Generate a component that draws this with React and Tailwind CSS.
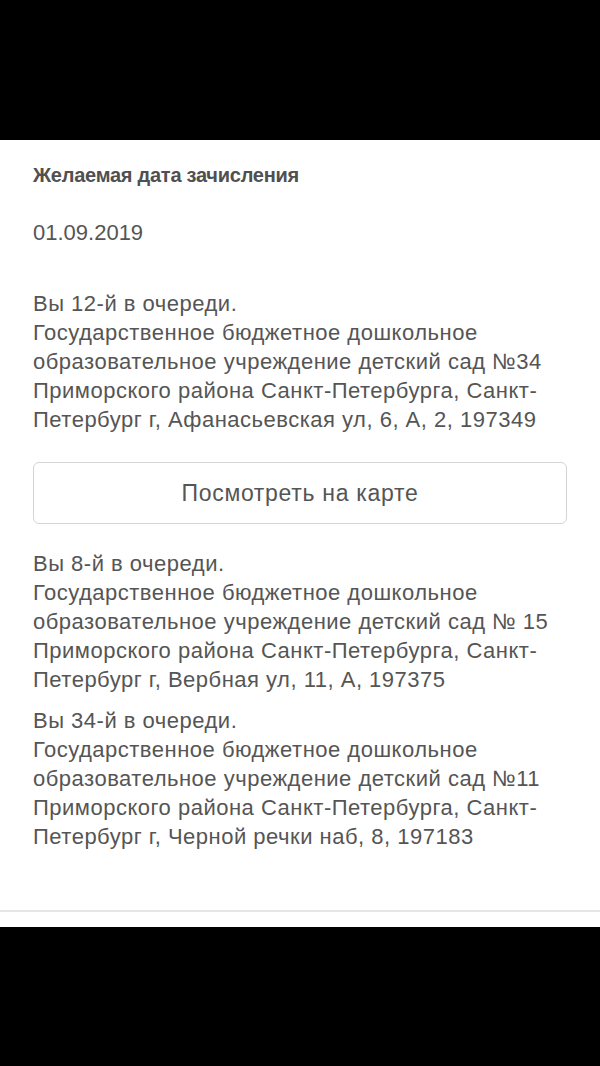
import React from "react";

const queues = [
  {
    place: "Вы 12-й в очереди.",
    lines: [
      "Государственное бюджетное дошкольное",
      "образовательное учреждение детский сад №34",
      "Приморского района Санкт-Петербурга, Санкт-",
      "Петербург г, Афанасьевская ул, 6, А, 2, 197349",
    ],
  },
  {
    place: "Вы 8-й в очереди.",
    lines: [
      "Государственное бюджетное дошкольное",
      "образовательное учреждение детский сад № 15",
      "Приморского района Санкт-Петербурга, Санкт-",
      "Петербург г, Вербная ул, 11, А, 197375",
    ],
  },
  {
    place: "Вы 34-й в очереди.",
    lines: [
      "Государственное бюджетное дошкольное",
      "образовательное учреждение детский сад №11",
      "Приморского района Санкт-Петербурга, Санкт-",
      "Петербург г, Черной речки наб, 8, 197183",
    ],
  },
];

function QueueItem({ item }) {
  return (
    <div className="text-[22px] leading-[29px] tracking-[0.5px] text-[#555555]">
      <div>{item.place}</div>
      {item.lines.map((line) => (
        <div key={line} className="whitespace-nowrap">{line}</div>
      ))}
    </div>
  );
}

export default function App() {
  return (
    <div className="w-[600px] min-h-[1066px] bg-black" style={{ fontFamily: "'Liberation Sans', Arial, sans-serif" }}>
      <div className="h-[140px]" />
      <div className="bg-white">
        <div className="px-[33px] pt-[21px]">
          <h2 className="text-[20px] leading-[29px] font-bold tracking-[-0.25px] text-[#505050]">Желаемая дата зачисления</h2>
          <div className="mt-[28px] text-[22px] leading-[29px] text-[#555555]">01.09.2019</div>

          <div className="mt-[42px]">
            <QueueItem item={queues[0]} />
          </div>

          <button className="mt-[28px] w-full h-[62px] rounded-[6px] border border-[#d4d4d4] bg-white text-[23px] tracking-[0.7px] text-[#555555]">
            Посмотреть на карте
          </button>

          <div className="mt-[25px]">
            <QueueItem item={queues[1]} />
          </div>
          <div className="mt-[12px]">
            <QueueItem item={queues[2]} />
          </div>
        </div>
        <div className="h-[59px]" />
        <div className="h-[2px] bg-[#e6e6e6]" />
        <div className="h-[15px]" />
      </div>
    </div>
  );
}
